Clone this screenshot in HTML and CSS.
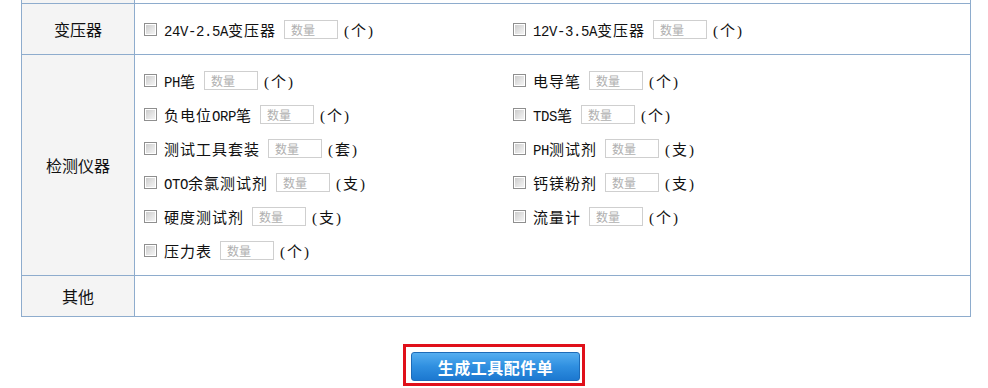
FILE: index.html
```html
<!DOCTYPE html>
<html lang="zh-CN">
<head>
    <meta charset="UTF-8">
    <title>工具配件单</title>
    <link rel="stylesheet" href="styles.css">
</head>
<body>
    <div class="page">
        <table class="parts-table">
            <tr class="row-cut">
                <td class="label"></td>
                <td class="content"></td>
            </tr>
            <tr class="row-single">
                <td class="label">变压器</td>
                <td class="content">
                    <div class="items">
                        <label class="item"><input type="checkbox" class="chk"><span class="name"><span class="latin">24V-2.5A</span>变压器</span><input type="text" class="qty" placeholder="数量"><span class="unit">(个)</span></label>
                        <label class="item"><input type="checkbox" class="chk"><span class="name"><span class="latin">12V-3.5A</span>变压器</span><input type="text" class="qty" placeholder="数量"><span class="unit">(个)</span></label>
                    </div>
                </td>
            </tr>
            <tr>
                <td class="label">检测仪器</td>
                <td class="content content-multi">
                    <div class="items">
                        <label class="item"><input type="checkbox" class="chk"><span class="name"><span class="latin">PH</span>笔</span><input type="text" class="qty" placeholder="数量"><span class="unit">(个)</span></label>
                        <label class="item"><input type="checkbox" class="chk"><span class="name">电导笔</span><input type="text" class="qty" placeholder="数量"><span class="unit">(个)</span></label>
                        <label class="item"><input type="checkbox" class="chk"><span class="name">负电位<span class="latin">ORP</span>笔</span><input type="text" class="qty" placeholder="数量"><span class="unit">(个)</span></label>
                        <label class="item"><input type="checkbox" class="chk"><span class="name"><span class="latin">TDS</span>笔</span><input type="text" class="qty" placeholder="数量"><span class="unit">(个)</span></label>
                        <label class="item"><input type="checkbox" class="chk"><span class="name">测试工具套装</span><input type="text" class="qty" placeholder="数量"><span class="unit">(套)</span></label>
                        <label class="item"><input type="checkbox" class="chk"><span class="name"><span class="latin">PH</span>测试剂</span><input type="text" class="qty" placeholder="数量"><span class="unit">(支)</span></label>
                        <label class="item"><input type="checkbox" class="chk"><span class="name"><span class="latin">OTO</span>余氯测试剂</span><input type="text" class="qty" placeholder="数量"><span class="unit">(支)</span></label>
                        <label class="item"><input type="checkbox" class="chk"><span class="name">钙镁粉剂</span><input type="text" class="qty" placeholder="数量"><span class="unit">(支)</span></label>
                        <label class="item"><input type="checkbox" class="chk"><span class="name">硬度测试剂</span><input type="text" class="qty" placeholder="数量"><span class="unit">(支)</span></label>
                        <label class="item"><input type="checkbox" class="chk"><span class="name">流量计</span><input type="text" class="qty" placeholder="数量"><span class="unit">(个)</span></label>
                        <label class="item"><input type="checkbox" class="chk"><span class="name">压力表</span><input type="text" class="qty" placeholder="数量"><span class="unit">(个)</span></label>
                    </div>
                </td>
            </tr>
            <tr class="row-other">
                <td class="label">其他</td>
                <td class="content"></td>
            </tr>
        </table>

        <div class="actions">
            <div class="btn-frame">
                <button type="button" class="btn-submit">生成工具配件单</button>
            </div>
        </div>
    </div>
</body>
</html>
```

FILE: styles.css
```css
body {
    margin: 0;
    background: #fff;
    color: #111;
    font-family: "Liberation Serif", "Noto Sans CJK SC", serif;
    font-size: 14px;
    overflow: hidden;
}

.page {
    width: 950px;
    margin-left: 21px;
}

.parts-table {
    width: 950px;
    border-collapse: collapse;
    margin-top: -38px;
}

.parts-table td {
    border: 1px solid #8eaccd;
    padding: 0;
}

.row-cut td {
    height: 40px;
}

.label {
    width: 112px;
    background: #f4f4f4;
    text-align: center;
    font-family: "Noto Sans CJK SC", sans-serif;
    font-size: 16px;
}

.row-single td {
    height: 50px;
}

.row-other td {
    height: 40px;
}

.content {
    padding-left: 9px !important;
}

.content-multi {
    padding-top: 8px !important;
    padding-bottom: 8px !important;
}

.items {
    display: grid;
    grid-template-columns: 369px 1fr;
}

.item {
    display: flex;
    align-items: center;
    height: 34px;
}

.chk {
    appearance: none;
    -webkit-appearance: none;
    width: 13px;
    height: 13px;
    margin: 0 7px 0 0;
    border: 1px solid #8f8f8f;
    background: linear-gradient(135deg, #c8c8c8 0%, #e6e6e6 60%, #f7f7f7 100%);
    box-shadow: inset 0 0 0 1px #fff;
}

.name {
    margin-right: 8px;
    font-size: 15px;
    letter-spacing: 1px;
}

/* 半角字符按等宽显示 */
.latin {
    font-family: "Liberation Mono", monospace;
    font-size: 14px;
    letter-spacing: -0.4px;
}

.qty {
    box-sizing: border-box;
    width: 54px;
    height: 19px;
    padding: 0 6px;
    border: 1px solid #cfcfcf;
    font-family: "Noto Sans CJK SC", sans-serif;
    font-size: 12px;
    outline: none;
}

.qty::placeholder {
    color: #b0b0b0;
}

.unit {
    margin-left: 6px;
    font-size: 15px;
    letter-spacing: 2px;
}

.actions {
    display: flex;
    justify-content: center;
    margin-top: 27px;
    padding-right: 4px;
}

.btn-frame {
    border: 3px solid #e0101a;
    padding: 5px 2px 2px 5px;
}

.btn-submit {
    display: block;
    width: 169px;
    height: 29px;
    border: 1px solid #1d6bb8;
    border-radius: 3px;
    background: linear-gradient(to bottom, #55aef0 0%, #2f8fe0 50%, #1c78d0 100%);
    color: #fff;
    font-family: "Noto Sans CJK SC", sans-serif;
    font-size: 16px;
    font-weight: bold;
    letter-spacing: 0.5px;
}
```
